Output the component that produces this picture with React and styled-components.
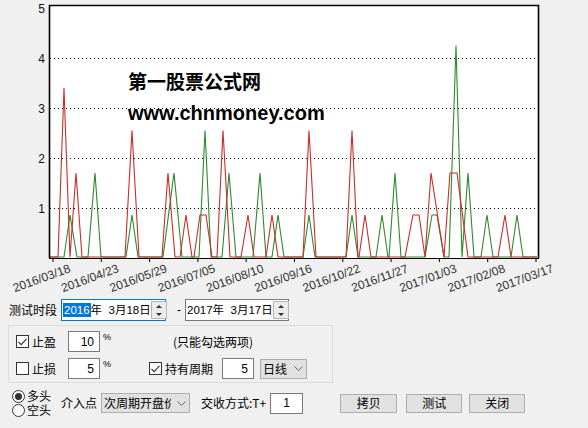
import React from 'react';
import styled, { createGlobalStyle } from 'styled-components';

const GlobalStyle = createGlobalStyle`
  html, body { margin: 0; padding: 0; background: #f0f0f0; }
  body {
    font-family: "Liberation Sans", "Noto Sans CJK SC", sans-serif;
    font-size: 12px;
    color: #000;
  }
`;

// chart geometry
const LEFT = 49;
const RIGHT = 538;
const TOP = 5;
const BASE = 258;
const yv = (v) => BASE - 50 * v;

// [start, peakStart, peakEnd, end, value]
const redSpikes = [
  [58, 64, 64, 70, 3.4], [70, 76, 76, 82, 1.7], [125, 132, 132, 139, 2.55],
  [162, 168, 168, 175, 1.7], [180, 186, 186, 192, 0.86], [194, 200, 206, 212, 0.86],
  [217, 223, 223, 230, 2.55], [241, 248, 248, 254, 0.86], [266, 272, 272, 278, 0.86],
  [303, 309, 309, 316, 2.55], [346, 352, 352, 358, 2.55], [359, 365, 365, 371, 0.86],
  [405, 413, 419, 425, 0.86], [425, 431, 431, 444, 1.7], [444, 450, 457, 468, 1.7],
  [498, 505, 505, 511, 0.86],
];

const greenSpikes = [
  [64, 70, 70, 77, 0.86], [88, 95, 95, 101, 1.7], [126, 132, 132, 138, 0.86],
  [163, 174, 174, 182, 1.7], [199, 205, 205, 211, 2.55], [222, 229, 229, 236, 1.7],
  [253, 260, 260, 266, 1.7], [272, 278, 278, 284, 0.86], [303, 309, 309, 315, 0.86],
  [346, 352, 352, 358, 0.86], [376, 382, 382, 388, 0.86], [389, 395, 395, 401, 1.7],
  [425, 432, 437, 444, 0.86], [449, 456, 456, 462, 4.25], [462, 468, 468, 474, 1.7],
  [481, 487, 487, 493, 0.86], [511, 517, 517, 523, 0.86],
];

const dates = [
  '2016/03/18', '2016/04/23', '2016/05/29', '2016/07/05', '2016/08/10', '2016/09/16',
  '2016/10/22', '2016/11/27', '2017/01/03', '2017/02/08', '2017/03/17',
];

function toPoints(spikes, base) {
  const pts = [[LEFT + 1, base]];
  spikes.forEach(([a, b, c, d, v]) => {
    pts.push([a, base], [b, yv(v)], [c, yv(v)], [d, base]);
  });
  pts.push([RIGHT - 1, base]);
  return pts.map((p) => p.join(',')).join(' ');
}

function Chart() {
  return (
    <svg width="588" height="296" viewBox="0 0 588 296">
      <rect x={LEFT} y={TOP} width={RIGHT - LEFT} height={BASE - TOP} fill="#fff" />
      {[1, 2, 3, 4].map((v) => (
        <line key={v} x1={LEFT + 1} x2={RIGHT - 1} y1={yv(v) + 0.5} y2={yv(v) + 0.5}
          stroke="#000" strokeWidth="1" strokeDasharray="1 3" />
      ))}
      {[1, 2, 3, 4, 5].map((v) => (
        <text key={v} x="45" y={yv(v) + 5} textAnchor="end"
          fontSize="12" fontFamily="Liberation Sans, sans-serif" fill="#111">{v}</text>
      ))}
      <polyline points={toPoints(greenSpikes, 257)} fill="none" stroke="#2d8a2d" strokeWidth="1.1" />
      <polyline points={toPoints(redSpikes, 257)} fill="none" stroke="#cc2b2b" strokeWidth="1.1" />
      <path d={`M${LEFT + 0.5} ${BASE} V${TOP + 0.5} H${RIGHT + 0.5} V${BASE}`} fill="none" stroke="#000" strokeWidth="1.6" />
      <line x1={LEFT} x2={RIGHT + 1} y1={BASE + 0.5} y2={BASE + 0.5} stroke="#000" strokeWidth="1" />
      {dates.map((d, i) => {
        const tx = 53 + i * 48.3;
        return (
          <g key={d}>
            <line x1={tx} x2={tx} y1={BASE} y2={BASE + 4} stroke="#000" strokeWidth="1" />
            <text transform={`translate(${tx - 10} 282) rotate(-20)`} textAnchor="middle"
              fontSize="12" fontFamily="Liberation Sans, sans-serif"
              fill="#333">{d}</text>
          </g>
        );
      })}
    </svg>
  );
}

const Page = styled.div`
  width: 588px;
  height: 428px;
  overflow: hidden;
  background: #f0f0f0;
  display: flex;
  flex-direction: column;
`;

const ChartBox = styled.div`
  position: relative;
  height: 296px;
  flex: none;
  svg { display: block; }
`;

const Watermark = styled.div`
  position: absolute;
  left: 128px;
  top: 65px;
  font-weight: bold;
  line-height: 32px;
  color: #000;
`;

const MarkCn = styled.div`
  font-family: "Noto Sans CJK SC", sans-serif;
  font-size: 19px;
`;

const MarkUrl = styled.div`
  font-family: "Liberation Sans", sans-serif;
  font-size: 20px;
`;

const Form = styled.div`
  padding: 3px 0 0 8px;
  display: flex;
  flex-direction: column;
`;

const Row = styled.div`
  display: flex;
  align-items: center;
  height: ${(p) => p.$h || 21}px;
`;

const Label = styled.span`
  font-family: "Noto Sans CJK SC", sans-serif;
  font-size: 12px;
  line-height: 14px;
  white-space: nowrap;
  margin-left: ${(p) => p.$ml || 0}px;
`;

const DateBox = styled.div`
  box-sizing: border-box;
  width: ${(p) => p.$w}px;
  height: 22px;
  margin-left: ${(p) => p.$ml || 0}px;
  border: 1px solid ${(p) => (p.$focus ? '#0078d7' : '#7a7a7a')};
  background: #fff;
  display: flex;
  align-items: center;
  padding-left: 1px;
  font-size: 11.5px;
  line-height: 14px;
  white-space: nowrap;
`;

const Sel = styled.span`
  background: #0078d7;
  color: #fff;
  padding: 0 1px;
`;

const Spin = styled.div`
  margin-left: auto;
  margin-right: 2px;
  flex: none;
  width: 14px;
  height: 16px;
  border: 1px solid #b5b5b5;
  background: #ececec;
  display: flex;
  flex-direction: column;
  align-items: center;
  justify-content: space-around;
`;

const Tri = styled.span`
  width: 0;
  height: 0;
  border-left: 3px solid transparent;
  border-right: 3px solid transparent;
  ${(p) => (p.$down ? 'border-top: 3px solid #333;' : 'border-bottom: 3px solid #333;')}
`;

const Dash = styled.span`
  margin-left: 11px;
  width: 8px;
  font-size: 12px;
`;

const GroupBox = styled.div`
  box-sizing: border-box;
  margin-top: 4px;
  width: 325px;
  height: 58px;
  border: 1px solid #dcdcdc;
  padding: 5px 0 0 7px;
  display: flex;
  flex-direction: column;
  gap: 6px;
`;

const CheckItem = styled.div`
  display: flex;
  align-items: center;
  width: ${(p) => p.$w}px;
  margin-left: ${(p) => p.$ml || 0}px;
  gap: 3px;
`;

const Box = styled.span`
  box-sizing: border-box;
  width: 13px;
  height: 13px;
  border: 1px solid #333;
  background: #fff;
  display: flex;
  align-items: center;
  justify-content: center;
`;

const Input = styled.div`
  box-sizing: border-box;
  width: ${(p) => p.$w}px;
  height: 21px;
  margin-left: ${(p) => p.$ml || 0}px;
  border: 1px solid #7a7a7a;
  background: #fff;
  display: flex;
  align-items: center;
  justify-content: ${(p) => (p.$center ? 'center' : 'flex-end')};
  padding-right: ${(p) => (p.$center ? 0 : 5)}px;
  font-size: 12px;
`;

const Pct = styled.span`
  align-self: flex-start;
  margin-left: 3px;
  margin-top: 1px;
  font-size: 9px;
  width: 6px;
`;

const Dropdown = styled.div`
  box-sizing: border-box;
  width: ${(p) => p.$w}px;
  height: 20px;
  margin-left: ${(p) => p.$ml || 0}px;
  border: 1px solid #adadad;
  background: #e1e1e1;
  display: flex;
  align-items: center;
  padding: 0 3px 0 2px;
  font-family: "Noto Sans CJK SC", sans-serif;
  font-size: 12px;
  line-height: 14px;
`;

// the reference shows the long option cut off by the arrow
const DropText = styled.span`
  white-space: nowrap;
  ${(p) => p.$clip && `max-width: ${p.$clip}px; overflow: hidden;`}
`;

const Chevron = styled.svg`
  margin-left: auto;
  flex: none;
`;

const BottomRow = styled.div`
  margin-top: 5px;
  height: 30px;
  display: flex;
  align-items: center;
`;

const RadioCol = styled.div`
  display: flex;
  flex-direction: column;
  margin-left: 4px;
  width: 49px;
`;

const RadioItem = styled.div`
  display: flex;
  align-items: center;
  gap: 2px;
  height: 14px;
`;

const Circle = styled.span`
  box-sizing: border-box;
  flex: none;
  width: 13px;
  height: 13px;
  border-radius: 50%;
  border: 1px solid #333;
  background: #fff;
  display: flex;
  align-items: center;
  justify-content: center;
  &::after {
    content: '';
    width: 7px;
    height: 7px;
    border-radius: 50%;
    background: ${(p) => (p.$on ? '#333' : 'transparent')};
  }
`;

const Button = styled.button`
  box-sizing: border-box;
  width: ${(p) => p.$w || 56}px;
  height: 19px;
  margin-left: ${(p) => p.$ml || 8}px;
  border: 1px solid #adadad;
  background: #e1e1e1;
  padding: 0;
  font-family: "Noto Sans CJK SC", sans-serif;
  font-size: 12px;
  line-height: 14px;
  color: #000;
  display: flex;
  align-items: center;
  justify-content: center;
`;

function Check({ on }) {
  return (
    <Box>
      {on && (
        <svg width="9" height="8" viewBox="0 0 9 8">
          <polyline points="0.5,4 3.2,6.7 8.5,0.8" fill="none" stroke="#333" strokeWidth="1.1" />
        </svg>
      )}
    </Box>
  );
}

function Down() {
  return (
    <Chevron width="9" height="5" viewBox="0 0 9 5">
      <polyline points="0.5,0.5 4.5,4.5 8.5,0.5" fill="none" stroke="#666" strokeWidth="1" />
    </Chevron>
  );
}

export default function App() {
  return (
    <Page>
      <GlobalStyle />
      <ChartBox>
        <Chart />
        <Watermark>
          <MarkCn>第一股票公式网</MarkCn>
          <MarkUrl>www.chnmoney.com</MarkUrl>
        </Watermark>
      </ChartBox>

      <Form>
        <Row $h={22}>
          <Label $ml={1}>测试时段</Label>
          <DateBox $w={105} $ml={4} $focus>
            <Sel>2016</Sel>年&nbsp; 3月18日
            <Spin><Tri /><Tri $down /></Spin>
          </DateBox>
          <Dash>-</Dash>
          <DateBox $w={104}>
            2017年&nbsp; 3月17日
            <Spin><Tri /><Tri $down /></Spin>
          </DateBox>
        </Row>

        <GroupBox>
          <Row>
            <CheckItem $w={52}><Check on /><Label>止盈</Label></CheckItem>
            <Input $w={32}>10</Input>
            <Pct>%</Pct>
            <Label $ml={64}>(只能勾选两项)</Label>
          </Row>
          <Row>
            <CheckItem $w={52}><Check /><Label>止损</Label></CheckItem>
            <Input $w={32}>5</Input>
            <Pct>%</Pct>
            <CheckItem $w={73} $ml={40}><Check on /><Label>持有周期</Label></CheckItem>
            <Input $w={32}>5</Input>
            <Dropdown $w={47} $ml={6}>
              <DropText>日线</DropText>
              <Down />
            </Dropdown>
          </Row>
        </GroupBox>

        <BottomRow>
          <RadioCol>
            <RadioItem><Circle $on /><Label>多头</Label></RadioItem>
            <RadioItem><Circle /><Label>空头</Label></RadioItem>
          </RadioCol>
          <Label>介入点</Label>
          <Dropdown $w={89} $ml={4}>
            <DropText $clip={67}>次周期开盘价</DropText>
            <Down />
          </Dropdown>
          <Label $ml={11}>交收方式:T+</Label>
          <Input $w={33} $ml={4} $center>1</Input>
          <Button $w={57} $ml={37}>拷贝</Button>
          <Button $ml={9}>测试</Button>
          <Button $ml={7}>关闭</Button>
        </BottomRow>
      </Form>
    </Page>
  );
}
